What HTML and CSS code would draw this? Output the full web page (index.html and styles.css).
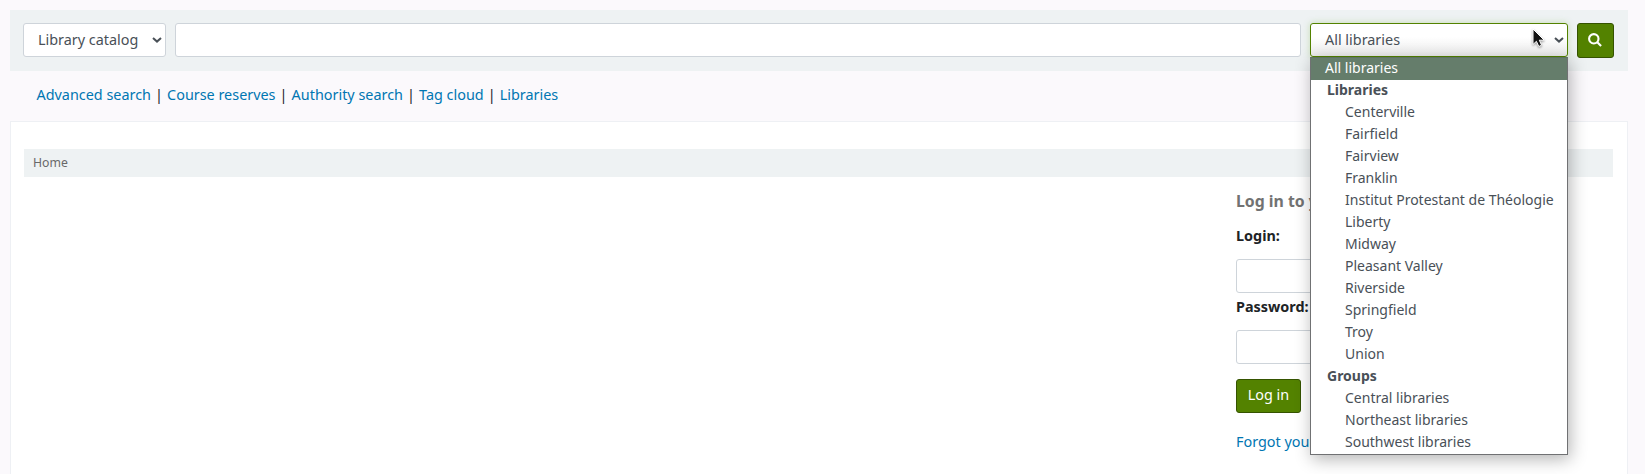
FILE: index.html
```html
<!DOCTYPE html>
<html lang="en">
<head>
<meta charset="utf-8">
<title>Library catalog</title>
<link rel="stylesheet" href="styles.css">
</head>
<body>
<header class="search-bar">
  <div class="select catalog"><span>Library catalog</span>
    <svg class="chevron" width="10" height="6" viewBox="0 0 10 6"><path d="M1 1l4 3.6L9 1"/></svg>
  </div>
  <input class="field query" type="text" aria-label="Search">
  <div class="select branch"><span>All libraries</span>
    <svg class="chevron" width="10" height="6" viewBox="0 0 10 6"><path d="M1 1l4 3.6L9 1"/></svg>
    <div class="menu">
      <div class="option selected">All libraries</div>
      <div class="group">Libraries</div>
      <div class="option nested">Centerville</div>
      <div class="option nested">Fairfield</div>
      <div class="option nested">Fairview</div>
      <div class="option nested">Franklin</div>
      <div class="option nested">Institut Protestant de Théologie</div>
      <div class="option nested">Liberty</div>
      <div class="option nested">Midway</div>
      <div class="option nested">Pleasant Valley</div>
      <div class="option nested">Riverside</div>
      <div class="option nested">Springfield</div>
      <div class="option nested">Troy</div>
      <div class="option nested">Union</div>
      <div class="group">Groups</div>
      <div class="option nested">Central libraries</div>
      <div class="option nested">Northeast libraries</div>
      <div class="option nested">Southwest libraries</div>
    </div>
    <svg class="pointer" width="14" height="20" viewBox="0 0 14 20"><path d="M1 1v15.5l3.4-3.2 2.4 5.2 2.8-1.3-2.3-5h4.9z"/></svg>
  </div>
  <button class="search-button" aria-label="Search">
    <svg width="14" height="14" viewBox="0 0 14 14"><circle cx="5.8" cy="5.8" r="4.7"/><path d="M9.3 9.3l3.8 3.8"/></svg>
  </button>
</header>
<nav class="links"><a>Advanced search</a><i>|</i><a>Course reserves</a><i>|</i><a>Authority search</a><i>|</i><a>Tag cloud</a><i>|</i><a>Libraries</a></nav>
<main class="panel">
  <div class="breadcrumb">Home</div>
  <form class="login">
    <h2 class="login-title">Log in to your</h2>
    <label class="login-label">Login:</label>
    <input class="field login-field" type="text">
    <label class="login-label second">Password:</label>
    <input class="field login-field" type="password">
    <button class="login-button" type="button">Log in</button>
    <a class="forgot">Forgot your</a>
  </form>
</main>
</body>
</html>
```
FILE: styles.css
```css
* { box-sizing: border-box; }
body {
  margin: 0;
  padding: 10px 17px 0 10px;
  height: 474px;
  overflow: hidden;
  display: flex;
  flex-direction: column;
  background: #fbf9fc;
  color: #202326;
  font: 14.4px "Noto Sans", sans-serif;
}
.search-bar {
  display: flex;
  align-items: flex-start;
  height: 61px;
  padding: 13px 14px 0 13px;
  background: #eef2f3;
}
.select, .field {
  height: 34px;
  border: 1px solid #ced4da;
  border-radius: 3px;
  background: #fff;
}
.select {
  position: relative;
  display: flex;
  align-items: center;
  justify-content: space-between;
  padding: 0 3px 0 14px;
  color: #495057;
  line-height: 32px;
}
.catalog { width: 143px; }
.chevron { fill: none; stroke: #495057; stroke-width: 2; }
.query { flex: 1; margin: 0 9px; padding: 0 10px; }
.branch {
  width: 258px;
  border-color: #538200;
  background: linear-gradient(#fff 40%, #ececec);
  box-shadow: 0 0 7px rgba(83, 160, 0, .25);
}
.menu {
  position: absolute;
  z-index: 2;
  top: 33px;
  left: -1px;
  width: 258px;
  border: 1px solid #707173;
  border-top-color: #5c7260;
  background: #fff;
  box-shadow: 2px 4px 16px rgba(0, 0, 0, .3);
  font-size: 14px;
}
.option, .group { height: 22px; line-height: 20px; padding-left: 14px; white-space: nowrap; }
.group { padding-left: 16px; font-weight: 700; }
.nested { padding-left: 34px; }
.selected { background: #657d6b; color: #fff; }
.pointer {
  position: absolute;
  z-index: 3;
  left: 221px;
  top: 4px;
  fill: #111;
  stroke: #fff;
  stroke-width: 1;
  filter: drop-shadow(0 1px 1px rgba(0, 0, 0, .4));
}
.search-button, .login-button {
  border: 1px solid #355300;
  border-radius: 3px;
  background: #538200;
  color: #fff;
  font: inherit;
}
.search-button {
  display: flex;
  align-items: center;
  justify-content: center;
  width: 37px;
  height: 35px;
  margin-left: 9px;
  padding: 0 1px 1px 0;
}
.search-button svg { fill: none; stroke: #fff; stroke-width: 2.1; }
.links { height: 50px; padding-left: 26.5px; line-height: 47px; white-space: nowrap; }
.links a, .forgot { color: #0076b2; }
.links i { display: inline-block; width: 16.1px; text-align: center; font-style: normal; }
.panel {
  flex: 1;
  padding: 27px 14px 0 13px;
  border: 1px solid #eef0f4;
  border-bottom: 0;
  background: #fff;
}
.breadcrumb {
  height: 28px;
  padding-left: 9px;
  background: #eef2f3;
  color: #696969;
  font-size: 12.25px;
  line-height: 27px;
}
.login { display: flex; flex-direction: column; width: 377px; margin-left: auto; padding-top: 12px; }
.login-title { height: 25px; margin: 0; color: #727272; font-size: 15.84px; line-height: 25px; }
.login-label { height: 45px; padding-top: 12px; font-size: 14.4px; font-weight: 700; line-height: 20px; }
.second { height: 37px; padding-top: 4px; }
.login-field { width: 300px; }
.login-button { align-self: flex-start; width: 65px; height: 34px; margin-top: 15px; padding: 0 0 2px; line-height: 30px; }
.forgot { margin-top: 19px; line-height: 20px; }
```
